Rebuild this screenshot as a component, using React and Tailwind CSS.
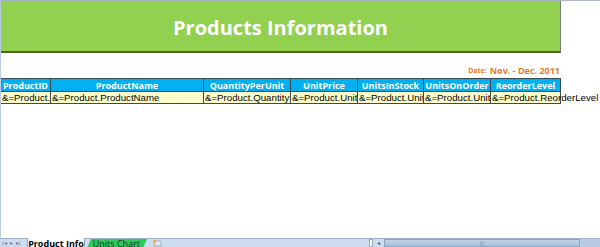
import React from "react";

const cols = [
  { name: "ProductID", w: "w-[50px]", val: "&=Product.ProductID" },
  { name: "ProductName", w: "w-[153px]", val: "&=Product.ProductName" },
  { name: "QuantityPerUnit", w: "w-[87px]", val: "&=Product.QuantityPerUnit" },
  { name: "UnitPrice", w: "w-[67px]", val: "&=Product.UnitPrice" },
  { name: "UnitsInStock", w: "w-[66px]", val: "&=Product.UnitsInStock" },
  { name: "UnitsOnOrder", w: "w-[67px]", val: "&=Product.UnitsOnOrder" },
  { name: "ReorderLevel", w: "w-[70px]", val: "&=Product.ReorderLevel" },
];

function SheetTabs() {
  return (
    <div className="h-[9px] flex items-start bg-[#cddcee] border-t border-[#9eb1c8] overflow-visible">
      <div className="w-[27px] flex items-center gap-[3px] pl-[2px] pt-[1px] text-[6px] leading-none text-[#6c7f99]">
        <span>|◂</span>
        <span>▸</span>
        <span>▸|</span>
      </div>
      <div className="w-[58px] h-[11px] -mt-[1px] bg-white border-x border-[#8ea3bf] text-[9px] font-bold leading-[11px] text-black text-center font-['Open_Sans',sans-serif]">
        Product Info
      </div>
      <div className="w-[56px] h-[9px] ml-[4px] bg-[#2fc85b] text-[9px] leading-[10px] text-[#0c3a18] skew-x-[-25deg] text-center font-['Open_Sans',sans-serif]">
        <span className="inline-block skew-x-[25deg]">Units Chart</span>
      </div>
      <div className="ml-[4px] w-[16px] h-[8px] flex items-center justify-center">
        <svg width="10" height="8" viewBox="0 0 10 8">
          <rect x="2" y="2" width="7" height="5" fill="#dfe7f2" stroke="#8ea3bf" strokeWidth="0.8" />
          <circle cx="2.5" cy="2.5" r="1.6" fill="#f0b030" />
        </svg>
      </div>
      <div className="w-[204px]" />
      <div className="w-[4px] h-[8px] bg-white border border-[#9aa9bb]" />
      <div className="w-[11px] flex justify-center text-[6px] text-[#4a5b72] leading-[8px]">◂</div>
      <div className="w-[196px] h-[8px] bg-gradient-to-b from-[#c2d3ea] to-[#a9bfdb] border border-[#8ea6c6] flex justify-center">
        <span className="text-[5px] leading-[7px] text-[#7d90aa]">|||</span>
      </div>
      <div className="flex-1 h-[8px] bg-[#b9cbe2]" />
    </div>
  );
}

export default function App() {
  return (
    <div className="w-[600px] h-[247px] flex flex-col bg-white overflow-hidden border-t border-[#a9b6c5] font-['Liberation_Sans',Arial,sans-serif]">
      <div className="flex-1 flex flex-col border-l border-[#b8cbe2]">
        <div className="w-[560px] h-[52px] bg-[#92d050] border-b-2 border-b-[#4f6228] border-r border-r-[#7f7f7f] flex items-center justify-center pt-[3px]">
          <span className="text-[20px] font-bold text-white font-['Open_Sans',sans-serif] leading-none">
            Products Information
          </span>
        </div>
        <div className="w-[559px] h-[25px] flex items-end justify-end gap-[3px] pb-[2px] font-['Open_Sans',sans-serif] font-bold text-[#f07828]">
          <span className="text-[7px] leading-[10px]">Date:</span>
          <span className="text-[9px] leading-[11px]">Nov. - Dec. 2011</span>
        </div>
        <div className="flex">
          {cols.map((c) => (
            <div
              key={c.name}
              className={`${c.w} h-[13px] bg-[#00b0f0] border-t border-r border-[#3a4a55] flex items-center justify-center text-[9px] font-bold text-white font-['Open_Sans',sans-serif] leading-none`}
            >
              {c.name}
            </div>
          ))}
        </div>
        <div className="flex">
          {cols.map((c, i) => (
            <div
              key={c.name}
              className={`${c.w} h-[13px] bg-[#ffffcc] border-t border-b border-r border-[#3a4a55] text-[9.7px] leading-[12px] text-black pl-[1px] whitespace-nowrap ${i === cols.length - 1 ? "overflow-visible" : "overflow-hidden"}`}
            >
              {c.val}
            </div>
          ))}
        </div>
        <div className="flex-1" />
      </div>
      <SheetTabs />
    </div>
  );
}
